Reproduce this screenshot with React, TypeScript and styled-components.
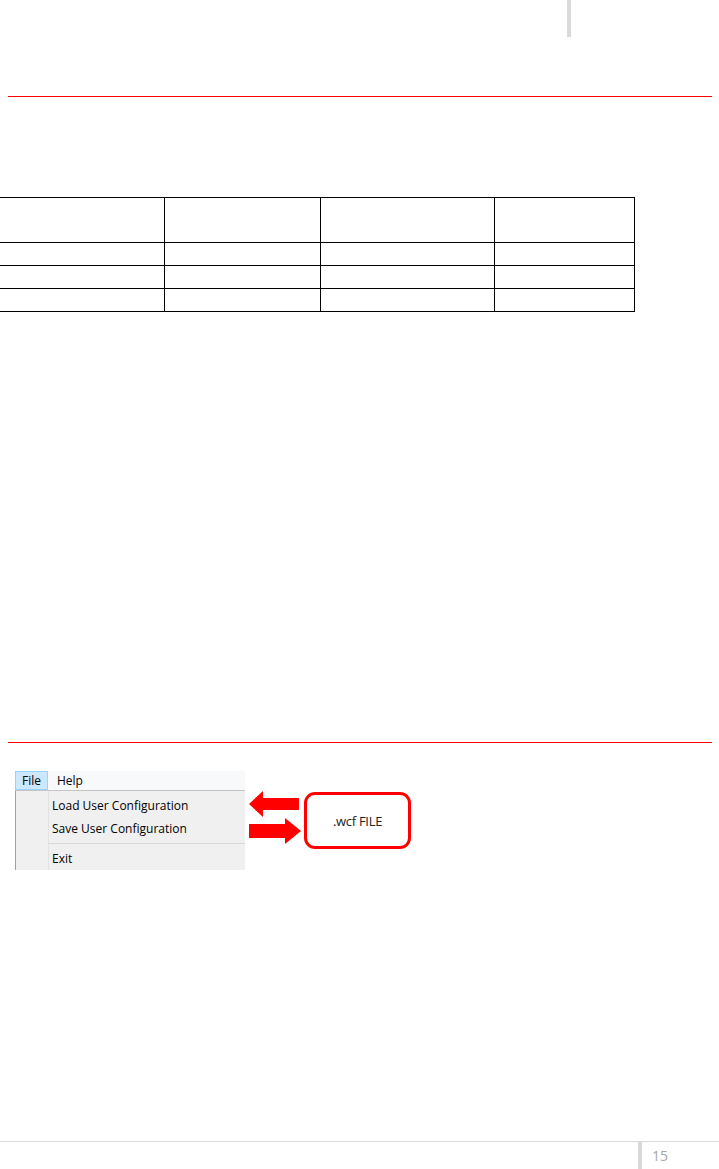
import * as React from 'react'
import styled, { createGlobalStyle } from 'styled-components'

const GlobalStyle = createGlobalStyle`
  html, body {
    margin: 0;
    padding: 0;
    background: #fff;
  }
  * {
    box-sizing: border-box;
  }
`

const Page = styled.div`
  width: 719px;
  min-height: 1169px;
  display: flex;
  flex-direction: column;
  background: #fff;
  overflow: hidden;
  font-family: 'Open Sans', 'Liberation Sans', sans-serif;
`

const Header = styled.div`
  height: 37px;
  display: flex;
`

const HeaderBar = styled.div`
  width: 4px;
  height: 100%;
  margin-left: 567px;
  background: #d9d9d9;
`

const RedRule = styled.div<{ top: number }>`
  margin-top: ${props => props.top}px;
  margin-left: 8px;
  width: 704px;
  height: 1px;
  background: #ff0000;
`

const Grid = styled.div`
  display: grid;
  grid-template-columns: 165px 156px 174px 140px;
  margin-top: 100px;
  margin-left: -1px;
  width: 636px;
  border-top: 1px solid #000;
  border-left: 1px solid #000;
`

const Cell = styled.div<{ tall?: boolean }>`
  height: ${props => (props.tall ? '45px' : '23px')};
  border-right: 1px solid #000;
  border-bottom: 1px solid #000;
`

const MenuRow = styled.div`
  display: flex;
  align-items: center;
  margin-top: 28px;
  margin-left: 15px;
`

const Menu = styled.div`
  width: 230px;
  height: 99px;
  display: flex;
  flex-direction: column;
  font-family: 'Open Sans', 'Liberation Sans', sans-serif;
  font-size: 12px;
  color: #000;
`

const MenuBar = styled.div`
  height: 20px;
  display: flex;
  align-items: stretch;
  background: #f8f9fa;
  border-bottom: 1px solid #c4c4c4;
`

const MenuTitle = styled.div<{ active?: boolean }>`
  display: flex;
  align-items: center;
  padding: 0 ${props => (props.active ? '6px' : '8px')};
  background: ${props => (props.active ? '#cce8ff' : 'transparent')};
  border: 1px solid ${props => (props.active ? '#99d1ff' : 'transparent')};
  width: ${props => (props.active ? '33px' : 'auto')};
`

const Dropdown = styled.div`
  flex: 1;
  display: flex;
  flex-direction: column;
  padding-top: 3px;
  background: #f0f0f0;
  border-left: 1px solid #a0a0a0;
  position: relative;
`

const Gutter = styled.div`
  position: absolute;
  left: 32px;
  top: 0;
  bottom: 0;
  width: 1px;
  background: #e2e2e2;
`

const MenuItem = styled.div`
  height: 23px;
  display: flex;
  align-items: center;
  padding-left: 36px;
  white-space: nowrap;
`

const Separator = styled.div`
  height: 1px;
  margin: 3px 0 3px 33px;
  background: #d7d7d7;
`

const Arrows = styled.svg`
  margin-left: 3px;
  margin-bottom: 6px;
  flex: none;
`

const FileBox = styled.div`
  width: 107px;
  height: 57px;
  margin-left: 2px;
  border: 3px solid #ff0000;
  border-radius: 11px;
  display: flex;
  align-items: center;
  justify-content: center;
  font-family: 'Open Sans', 'Liberation Sans', sans-serif;
  font-size: 13px;
  letter-spacing: -0.3px;
  color: #222;
`

const Footer = styled.div`
  margin-top: auto;
  height: 28px;
  border-top: 1px solid #d9d9d9;
  display: flex;
  align-items: stretch;
`

const FooterBar = styled.div`
  width: 4px;
  margin-left: 638px;
  background: #d9d9d9;
`

const PageNumber = styled.div`
  margin-left: 10px;
  display: flex;
  align-items: center;
  font-family: 'Open Sans', 'Liberation Sans', sans-serif;
  font-size: 14px;
  color: #a6a6a6;
`

const rows = [true, false, false, false]

export default function App() {
  return (
    <>
      <GlobalStyle />
      <Page>
        <Header>
          <HeaderBar />
        </Header>
        <RedRule top={59} />
        <Grid>
          {rows.map((tall, r) =>
            [0, 1, 2, 3].map(c => <Cell key={`${r}-${c}`} tall={tall} />)
          )}
        </Grid>
        <RedRule top={430} />
        <MenuRow>
          <Menu>
            <MenuBar>
              <MenuTitle active>File</MenuTitle>
              <MenuTitle>Help</MenuTitle>
            </MenuBar>
            <Dropdown>
              <Gutter />
              <MenuItem>Load User Configuration</MenuItem>
              <MenuItem>Save User Configuration</MenuItem>
              <Separator />
              <MenuItem>Exit</MenuItem>
            </Dropdown>
          </Menu>
          <Arrows width="54" height="55" viewBox="0 0 54 55">
            <polygon points="1,14 15,1 15,8 51,8 51,20 15,20 15,27" fill="#ff0000" />
            <polygon points="1,34 37,34 37,28 53,41 37,54 37,48 1,48" fill="#ff0000" />
          </Arrows>
          <FileBox>.wcf FILE</FileBox>
        </MenuRow>
        <Footer>
          <FooterBar />
          <PageNumber>15</PageNumber>
        </Footer>
      </Page>
    </>
  )
}
